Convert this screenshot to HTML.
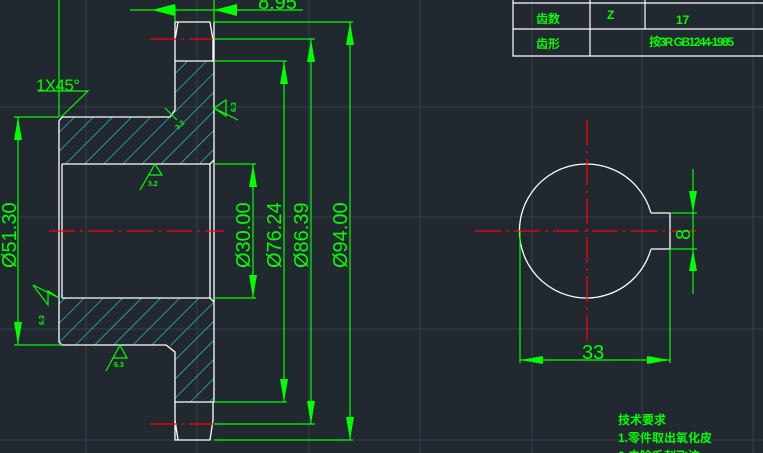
<!DOCTYPE html>
<html><head><meta charset="utf-8"><style>
html,body{margin:0;padding:0;background:#212830;width:763px;height:453px;overflow:hidden}
svg{display:block}
text{font-family:"Liberation Sans","Noto Sans CJK SC",sans-serif;fill:#00ff00}
.cj{font-family:"Liberation Serif","Noto Serif CJK SC",serif;font-weight:bold}
</style></head><body>
<svg width="763" height="453" viewBox="0 0 763 453" xmlns="http://www.w3.org/2000/svg">
<defs>
<pattern id="h" patternUnits="userSpaceOnUse" width="13.5" height="13.5" patternTransform="rotate(45)">
<line x1="0" y1="0" x2="0" y2="13.5" stroke="#22d4e0" stroke-width="1.3"/>
</pattern>
</defs>
<g stroke="#33404e" stroke-width="1">
<line x1="86" y1="0" x2="86" y2="453"/><line x1="197" y1="0" x2="197" y2="453"/>
<line x1="309" y1="0" x2="309" y2="453"/><line x1="420" y1="0" x2="420" y2="453"/>
<line x1="532" y1="0" x2="532" y2="453"/><line x1="642" y1="0" x2="642" y2="453"/>
<line x1="753" y1="0" x2="753" y2="453"/>
<line x1="0" y1="107" x2="763" y2="107"/><line x1="0" y1="217" x2="763" y2="217"/>
<line x1="0" y1="329" x2="763" y2="329"/><line x1="0" y1="440" x2="763" y2="440"/>
</g>
<path d="M175,61H214V160L210,164H62L59,161V121L62,117H170L175,112Z" fill="url(#h)"/>
<path d="M62,298H210L214,302V402H175V352L170,345H62L59,342V302Z" fill="url(#h)"/>
<g stroke="#ffffff" stroke-width="1.3" fill="none">
<path d="M175,61V22M178,22H210L213,40V61M175,22L178,22L175,40"/>
<path d="M175,61H214V22M214,61V160L210,164"/>
<path d="M175,61V110L170,117H62L59,121V342L62,345H166L175,352V402H214V302L210,298"/>
<path d="M62,164V298M210,164V298M62,164H210M62,298H210"/>
<path d="M175,402V440H178L175,420M178,440H210L213,420V402"/>
<path d="M214,160V302"/>
<path d="M651,213H670V249H651 M651,213 A67,67 0 1 0 651,249"/>
</g>
<g stroke="#ff0000" stroke-width="1.2" stroke-dasharray="26,5,3,5">
<line x1="150" y1="39" x2="213" y2="39"/><line x1="150" y1="424" x2="213" y2="424"/>
<line x1="49" y1="231" x2="224" y2="231"/>
<line x1="475" y1="231" x2="700" y2="231"/><line x1="587" y1="120" x2="587" y2="342"/>
</g>
<g stroke="#00ff00" stroke-width="1.2" fill="none">
<line x1="59" y1="0" x2="59" y2="117"/><line x1="214" y1="0" x2="214" y2="22"/>
<line x1="175" y1="6" x2="175" y2="22"/>
<line x1="130" y1="10" x2="303" y2="10"/>
<line x1="14" y1="117" x2="59" y2="117"/><line x1="14" y1="345" x2="62" y2="345"/>
<line x1="18" y1="117" x2="18" y2="345"/>
<line x1="214" y1="164" x2="256" y2="164"/><line x1="214" y1="298" x2="256" y2="298"/>
<line x1="253" y1="164" x2="253" y2="298"/>
<line x1="214" y1="61" x2="287" y2="61"/><line x1="214" y1="402" x2="287" y2="402"/>
<line x1="284" y1="61" x2="284" y2="402"/>
<line x1="214" y1="39" x2="315" y2="39"/><line x1="214" y1="424" x2="315" y2="424"/>
<line x1="311" y1="39" x2="311" y2="424"/>
<line x1="214" y1="22" x2="353" y2="22"/><line x1="214" y1="440" x2="353" y2="440"/>
<line x1="350" y1="22" x2="350" y2="440"/>
<path d="M38,91H88L61,117"/>
<path d="M165,108L177,120"/>
<path d="M214,108L238,120M214,108L226,100V116Z"/>
<path d="M140,190L155,164L162,175H148"/>
<path d="M33,285L59,298L48,291V305Z"/>
<path d="M106,371L120,345L127,358H113"/>
<line x1="670" y1="213" x2="697" y2="213"/><line x1="670" y1="249" x2="697" y2="249"/>
<line x1="693" y1="169" x2="693" y2="294"/>
<line x1="520" y1="231" x2="520" y2="363"/><line x1="670" y1="249" x2="670" y2="363"/>
<line x1="520" y1="360" x2="670" y2="360"/>
</g>
<g fill="#00ff00">
<path d="M152,10L175,4V16Z"/><path d="M214,10L237,4V16Z"/>
<path d="M18,117L14,140H22Z"/><path d="M18,345L14,322H22Z"/>
<path d="M253,164L249,187H257Z"/><path d="M253,298L249,275H257Z"/>
<path d="M284,61L280,84H288Z"/><path d="M284,402L280,379H288Z"/>
<path d="M311,39L307,62H315Z"/><path d="M311,424L307,401H315Z"/>
<path d="M350,22L346,45H354Z"/><path d="M350,440L346,417H354Z"/>
<path d="M693,213L689,191H697Z"/><path d="M693,249L689,271H697Z"/>
<path d="M520,360L543,356V364Z"/><path d="M670,360L647,356V364Z"/>
</g>
<text x="258" y="9" font-size="20">8.95</text>
<text x="36" y="91" font-size="17" font-family="Liberation Serif,serif" textLength="44">1X45°</text>
<g font-size="20">
<text transform="translate(16,268) rotate(-90)">Ø51.30</text>
<text transform="translate(250,268) rotate(-90)">Ø30.00</text>
<text transform="translate(281,268) rotate(-90)">Ø76.24</text>
<text transform="translate(308,268) rotate(-90)">Ø86.39</text>
<text transform="translate(347,268) rotate(-90)">Ø94.00</text>
<text transform="translate(690,240) rotate(-90)">8</text>
<text x="582" y="359">33</text>
</g>
<g font-size="7" font-weight="bold">
<text x="148" y="186">3.2</text><text x="114" y="367">6.3</text>
<text transform="translate(236,112) rotate(-90)">6.3</text>
<text transform="translate(44,325) rotate(-90)">6.3</text>
<text transform="translate(178,130) rotate(-45)">3.2</text>
</g>
<g stroke="#ffffff" stroke-width="1.2" fill="none">
<path d="M513,0V56H763M513,29H763M513,3H763M590,0V56M645,0V29"/>
</g>
<g class="cj" font-size="12">
<text x="536" y="23">齿数</text>
<text x="607" y="19">Z</text>
<text x="676" y="24">17</text>
<text x="536" y="48">齿形</text>
<text x="649" y="46" textLength="85">按3R GB1244-1985</text>
<text x="618" y="424">技术要求</text>
<text x="618" y="442">1.零件取出氧化皮</text>
<text x="618" y="460">2.去除毛刺飞边</text>
</g>
</svg>
</body></html>
